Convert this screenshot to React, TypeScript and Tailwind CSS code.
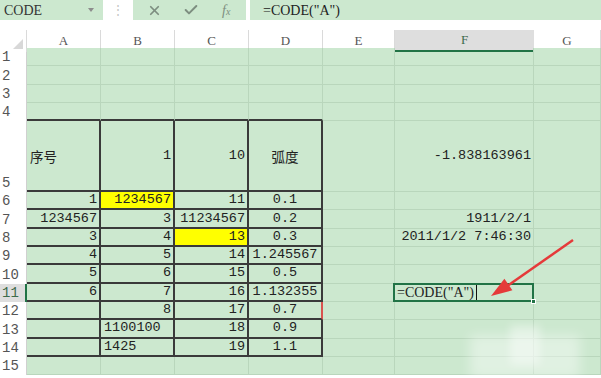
import { Check, X } from 'lucide-react'

type Cell = { v?: string; a?: 'l' | 'r' | 'c'; y?: boolean; cjk?: boolean }

const cols = ['A', 'B', 'C', 'D', 'E', 'F', 'G']

const rows: { n: number; h: string; cells: Cell[] }[] = [
  { n: 1, h: 'h-[18.3px]', cells: [] },
  { n: 2, h: 'h-[18.3px]', cells: [] },
  { n: 3, h: 'h-[18.3px]', cells: [] },
  { n: 4, h: 'h-[18.3px]', cells: [] },
  {
    n: 5,
    h: 'h-[71px]',
    cells: [
      { v: '序号', a: 'l', cjk: true },
      { v: '1' },
      { v: '10' },
      { v: '弧度', a: 'c', cjk: true },
      {},
      { v: '-1.838163961' },
    ],
  },
  { n: 6, h: 'h-[18.3px]', cells: [{ v: '1' }, { v: '1234567', y: true }, { v: '11' }, { v: '0.1', a: 'c' }] },
  {
    n: 7,
    h: 'h-[18.3px]',
    cells: [{ v: '1234567' }, { v: '3' }, { v: '11234567' }, { v: '0.2', a: 'c' }, {}, { v: '1911/2/1' }],
  },
  {
    n: 8,
    h: 'h-[18.3px]',
    cells: [{ v: '3' }, { v: '4' }, { v: '13', y: true }, { v: '0.3', a: 'c' }, {}, { v: '2011/1/2 7:46:30' }],
  },
  { n: 9, h: 'h-[18.3px]', cells: [{ v: '4' }, { v: '5' }, { v: '14' }, { v: '1.245567', a: 'c' }] },
  { n: 10, h: 'h-[18.3px]', cells: [{ v: '5' }, { v: '6' }, { v: '15' }, { v: '0.5', a: 'c' }] },
  { n: 11, h: 'h-[18.3px]', cells: [{ v: '6' }, { v: '7' }, { v: '16' }, { v: '1.132355', a: 'c' }] },
  { n: 12, h: 'h-[18.3px]', cells: [{}, { v: '8' }, { v: '17' }, { v: '0.7', a: 'c' }] },
  { n: 13, h: 'h-[18.3px]', cells: [{}, { v: '1100100', a: 'l' }, { v: '18' }, { v: '0.9', a: 'c' }] },
  { n: 14, h: 'h-[18.3px]', cells: [{}, { v: '1425', a: 'l' }, { v: '19' }, { v: '1.1', a: 'c' }] },
  { n: 15, h: 'h-[18.3px]', cells: [] },
]

const grid = 'grid grid-cols-[27px_74px_74px_74px_74px_72px_139px_1fr]'

function ActiveCell() {
  return (
    <div className="relative h-full">
      <div className="absolute -left-[2px] -top-[1px] -right-[1px] -bottom-[1px] border-2 border-[#217346] flex items-center pl-[2px] font-['Liberation_Serif',serif] text-[14px] text-[#222]">
        <span>=CODE("A")</span>
        <span className="ml-[2px] w-px h-[15px] bg-[#111]" />
      </div>
      <div className="absolute -right-[3px] -bottom-[3px] w-[5px] h-[5px] bg-[#217346] border border-white" />
    </div>
  )
}

export default function App() {
  return (
    <div className="relative w-[601px] h-[378px] overflow-hidden bg-white text-[#222]">
      {/* formula bar */}
      <div className="flex h-[20px] items-stretch">
        <div className="w-[103px] bg-[#cce8cf] flex items-center justify-between pl-[4px] pr-[9px]">
          <span className="font-['Liberation_Serif',serif] text-[14px] text-[#333]">CODE</span>
          <span className="w-0 h-0 border-l-[3px] border-r-[3px] border-t-[4px] border-l-transparent border-r-transparent border-t-[#8d8d8d]" />
        </div>
        <div className="w-[30px] flex items-center justify-center text-[#c4c4c4] text-[12px]">⋮</div>
        <div className="w-[113px] bg-[#cce8cf] flex items-center text-[#7d8e80]">
          <X size={15} strokeWidth={2.8} className="ml-[14px]" />
          <Check size={16} strokeWidth={3} className="ml-[21px]" />
          <span className="ml-[23px] font-['Liberation_Serif',serif] italic text-[14px]">
            f<span className="text-[10px]">x</span>
          </span>
        </div>
        <div className="w-[4px]" />
        <div className="flex-1 bg-[#cce8cf] flex items-center pl-[13px] font-['Liberation_Serif',serif] text-[14px] text-[#222]">
          =CODE("A")
        </div>
      </div>
      <div className="h-[10px]" />

      {/* column headers */}
      <div className={`${grid} h-[18px] font-['Liberation_Serif',serif] text-[13px] text-[#555]`}>
        <div className="relative border-r border-[#dadada]">
          <span className="absolute right-[3px] bottom-[3px] w-0 h-0 border-b-[10px] border-l-[10px] border-b-[#d8d8d8] border-l-transparent" />
        </div>
        {cols.map((c) => (
          <div
            key={c}
            className={
              c === 'F'
                ? 'flex items-center justify-center bg-[#dedede] border-b-2 border-[#217346] text-[#3d6b4b]'
                : 'flex items-center justify-center border-r border-[#dadada]'
            }
          >
            {c}
          </div>
        ))}
      </div>

      {/* rows */}
      <div className="bg-[#cce8cf]">
        {rows.map((r) => (
          <div key={r.n} className={`${grid} ${r.h}`}>
            <div
              className={
                r.n === 11
                  ? "flex items-end pl-[2px] leading-[18px] bg-[#dedede] border-r-2 border-[#217346] text-[#3d6b4b] font-['Liberation_Mono',monospace] text-[14px]"
                  : "flex items-end pl-[2px] leading-[18px] bg-white border-r border-[#d0d0d0] text-[#555] font-['Liberation_Mono',monospace] text-[14px]"
              }
            >
              {r.n}
            </div>
            {cols.map((c, i) => {
              const cell = r.cells[i] || {}
              const inTable = r.n >= 5 && r.n <= 14 && i <= 3
              const topEdge = r.n === 4 && i <= 3
              const border = inTable
                ? 'border-r-2 border-b-2 border-[#3a3a3a]'
                : topEdge
                  ? 'border-r border-r-[#b9d6bc] border-b-2 border-b-[#3a3a3a]'
                  : 'border-r border-b border-[#b9d6bc]'
              const align = cell.a === 'l' ? 'justify-start pl-[3px]' : cell.a === 'c' ? 'justify-center' : 'justify-end pr-[2px]'
              const font = cell.cjk
                ? "font-['Noto_Sans_CJK_SC',sans-serif] text-[13.5px]"
                : "font-['Liberation_Mono',monospace] text-[13.5px]"
              if (r.n === 11 && c === 'F') {
                return (
                  <div key={c} className="border-r border-b border-[#b9d6bc]">
                    <ActiveCell />
                  </div>
                )
              }
              return (
                <div
                  key={c}
                  className={`flex items-center whitespace-nowrap overflow-hidden ${border} ${align} ${font} ${cell.y ? 'bg-[#ffff00]' : ''} ${r.n === 12 && c === 'D' ? 'border-r-[#d9534f]' : ''}`}
                >
                  {cell.v}
                </div>
              )
            })}
          </div>
        ))}
      </div>

      {/* annotation arrow */}
      <svg className="absolute left-0 top-0 pointer-events-none" width="601" height="378">
        <line x1="573" y1="240" x2="506" y2="287" stroke="#e53a3a" strokeWidth="2.5" />
        <polygon points="491,296 512.4,290.3 504.4,278.8" fill="#e53a3a" />
      </svg>

      {/* watermark haze */}
      <div className="absolute left-[470px] top-[335px] w-[110px] h-[43px] bg-white/40 blur-[6px]" />
      <div className="absolute left-[510px] top-[325px] w-[30px] h-[40px] bg-white/40 blur-[4px]" />
    </div>
  )
}
